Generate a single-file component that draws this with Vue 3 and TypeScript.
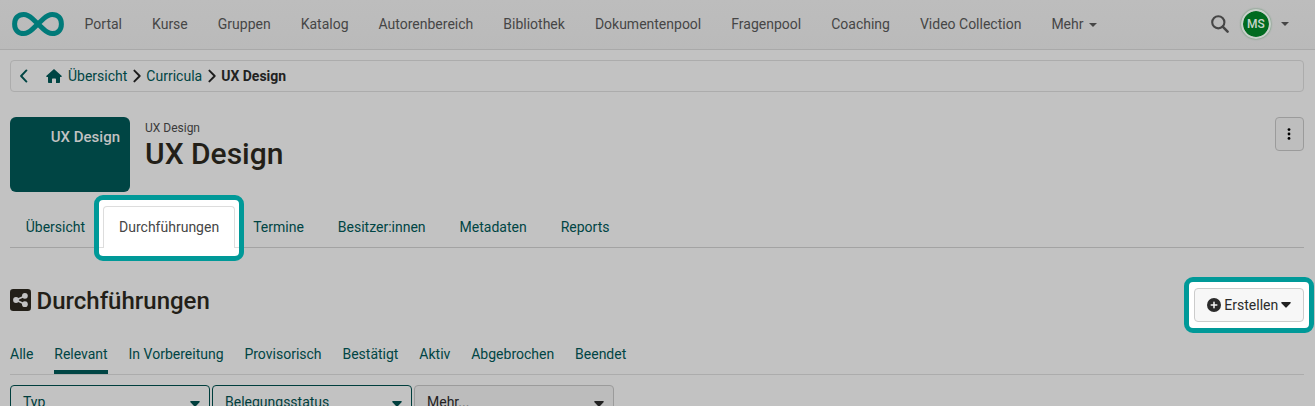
<script setup lang="ts">
const navItems: string[] = ['Portal', 'Kurse', 'Gruppen', 'Katalog', 'Autorenbereich', 'Bibliothek', 'Dokumentenpool', 'Fragenpool', 'Coaching', 'Video Collection']
const tabs: string[] = ['Übersicht', 'Durchführungen', 'Termine', 'Besitzer:innen', 'Metadaten', 'Reports']
const activeTab = 'Durchführungen'
const filters: string[] = ['Alle', 'Relevant', 'In Vorbereitung', 'Provisorisch', 'Bestätigt', 'Aktiv', 'Abgebrochen', 'Beendet']
const activeFilter = 'Relevant'
const selects: { label: string; muted: boolean }[] = [
  { label: 'Typ', muted: false },
  { label: 'Belegungsstatus', muted: false },
  { label: 'Mehr...', muted: true },
]
</script>

<template>
  <div class="page">
    <header class="navbar">
      <svg class="logo" viewBox="0 0 52 26" width="52" height="26">
        <path d="M26 13L20.500 7.800C17.500 5 15.500 3.400 11.800 3.400C6 3.400 2.600 7.200 2.600 13S6 22.600 11.800 22.600C15.500 22.600 17.500 21 20.500 18.200L31.500 7.800C34.500 5 36.500 3.400 40.200 3.400C46 3.400 49.400 7.200 49.400 13S46 22.600 40.200 22.600C36.500 22.600 34.500 21 31.500 18.200Z" fill="none" stroke="#007a79" stroke-width="5" />
      </svg>
      <nav class="nav">
        <a v-for="item in navItems" :key="item">{{ item }}</a>
        <a>Mehr<i class="caret"></i></a>
      </nav>
      <div class="tools">
        <svg class="search" viewBox="0 0 18 18" width="18" height="18">
          <circle cx="7.300" cy="7.300" r="6.100" fill="none" stroke="#464646" stroke-width="2.100" />
          <path d="M11.700 11.700L16.600 16.600" stroke="#464646" stroke-width="2.500" stroke-linecap="round" />
        </svg>
        <span class="avatar">MS</span>
        <i class="caret"></i>
      </div>
    </header>

    <div class="breadcrumb">
      <svg class="back" viewBox="0 0 8 14" width="8" height="14"><path d="M6.400 1.400L1.100 7L6.400 12.600" fill="none" stroke="#004544" stroke-width="1.900" stroke-linecap="round" stroke-linejoin="round" /></svg>
      <svg class="home" viewBox="0 0 16 14" width="16" height="14"><path d="M8 0L15.800 6.900Q16 8 15 8H14V13.200Q14 14 13.200 14H10V10.300Q10 9.600 9.300 9.600H6.700Q6 9.600 6 10.300V14H2.800Q2 14 2 13.200V8H1Q0 8 .2 6.900Z" fill="#004544" /></svg>
      <a>Übersicht</a>
      <svg class="sep" viewBox="0 0 8 14" width="8" height="14"><path d="M1.400 1.600L6.700 7L1.400 12.400" fill="none" stroke="#1c1c1c" stroke-width="1.900" stroke-linecap="round" stroke-linejoin="round" /></svg>
      <a>Curricula</a>
      <svg class="sep" viewBox="0 0 8 14" width="8" height="14"><path d="M1.400 1.600L6.700 7L1.400 12.400" fill="none" stroke="#1c1c1c" stroke-width="1.900" stroke-linecap="round" stroke-linejoin="round" /></svg>
      <strong>UX Design</strong>
    </div>

    <section class="hero">
      <div class="thumb">UX Design</div>
      <div class="titles">
        <small>UX Design</small>
        <h1>UX Design</h1>
      </div>
      <button class="more" aria-label="Menu">
        <svg viewBox="0 0 4 12" width="4" height="12"><circle cx="2" cy="1.600" r="1.400" /><circle cx="2" cy="6" r="1.400" /><circle cx="2" cy="10.400" r="1.400" /></svg>
      </button>
    </section>

    <nav class="tabs">
      <a v-for="tab in tabs" :key="tab" :class="{ active: tab === activeTab }"><span>{{ tab }}</span></a>
    </nav>

    <section class="heading">
      <svg viewBox="0 0 21 22" width="21" height="22">
        <rect width="21" height="22" rx="3.200" fill="#231f18" />
        <path d="M14.900 6.900L6 11L14.900 15.200" fill="none" stroke="#c2c2c2" stroke-width="1.700" />
        <circle cx="14.900" cy="6.800" r="2.900" fill="#c2c2c2" /><circle cx="6" cy="11" r="2.900" fill="#c2c2c2" /><circle cx="14.900" cy="15.200" r="2.900" fill="#c2c2c2" />
      </svg>
      <h2>Durchführungen</h2>
      <div class="spotlight">
        <button class="create">
          <svg class="plus" viewBox="0 0 14 14" width="14" height="14"><circle cx="7" cy="7" r="7" fill="#2b2b2b" /><path d="M7 4.200V9.800M4.200 7H9.800" stroke="#f7f7f7" stroke-width="1.500" stroke-linecap="round" /></svg>
          <span>Erstellen</span>
          <svg class="down" viewBox="0 0 10 6" width="10" height="6"><path d="M1 0H9Q10.300 .3 9.500 1.300L5.700 5.300Q5 6 4.300 5.300L.5 1.300Q-.3 .3 1 0Z" fill="#222" /></svg>
        </button>
      </div>
    </section>

    <nav class="filters">
      <a v-for="filter in filters" :key="filter" :class="{ active: filter === activeFilter }">{{ filter }}</a>
    </nav>

    <div class="selects">
      <button v-for="select in selects" :key="select.label" :class="{ muted: select.muted }">
        <span>{{ select.label }}</span>
        <svg viewBox="0 0 10 6" width="10" height="6"><path d="M1 0H9Q10.300 .3 9.500 1.300L5.700 5.300Q5 6 4.300 5.300L.5 1.300Q-.3 .3 1 0Z" fill="currentColor" /></svg>
      </button>
    </div>
  </div>
</template>

<style>
body { margin: 0; overflow: hidden; background: #c2c2c2; }
</style>

<style scoped>
* { box-sizing: border-box; }
.page {
  height: 406px;
  overflow: hidden;
  background: #c2c2c2;
  color: #222;
  font: 14px/20px Roboto, "Liberation Sans", sans-serif;
}
button { font: inherit; margin: 0; padding: 0; }
svg { display: block; flex: none; }
h1, h2 { margin: 0; color: #231f18; font-weight: 500; }
.navbar {
  display: flex;
  align-items: center;
  height: 50px;
  padding: 0 26px 2px 12px;
  border-bottom: 1px solid #a9a9a9;
  background: linear-gradient(#bdbdbd, #bababa);
  color: #464646;
}
.logo { margin-right: 6px; }
.nav { display: flex; margin-left: -.4px; white-space: nowrap; }
.nav a { padding: 0 15px; }
.caret {
  display: inline-block;
  border: 4px solid transparent;
  border-top-color: #464646;
  border-bottom: 0;
}
.nav .caret { margin-left: 6px; vertical-align: middle; }
.tools { display: flex; align-items: center; margin-left: auto; }
.search { margin-right: 12px; }
.avatar {
  width: 30px;
  height: 30px;
  margin-right: 10px;
  border: 2px solid #c8d0ca;
  border-radius: 50%;
  background: #006b20;
  background-clip: padding-box;
  box-shadow: 0 0 2px #528b61;
  color: #c8d5cc;
  font-size: 12px;
  font-weight: 500;
  line-height: 26px;
  text-align: center;
}
.breadcrumb {
  display: flex;
  align-items: center;
  height: 32px;
  margin: 10px 11px 0 10px;
  padding-left: 9px;
  border: 1px solid #acacac;
  border-radius: 4px;
}
.breadcrumb a { color: #004544; }
.home { margin: 0 6.500px 0 17.500px; }
.sep { margin: 0 5px 0 6px; }
.hero { display: flex; height: 75px; margin: 25px 11px 0 10px; }
.thumb {
  width: 120px;
  height: 75px;
  padding: 10px 10px;
  border-radius: 6px;
  background: #004544;
  color: #c2c2c2;
  font-size: 15px;
  font-weight: 500;
  line-height: 20px;
  text-align: right;
}
.titles { padding: 3px 0 0 15px; }
.titles small { display: block; color: #3a3a3a; font-size: 12px; line-height: 16px; }
.titles h1 { font-size: 30px; line-height: 36px; }
.more {
  display: flex;
  align-items: center;
  justify-content: center;
  width: 29px;
  height: 34px;
  margin-left: auto;
  padding-right: 1px;
  border: 1px solid #9b9b9b;
  border-radius: 4px;
  background: #bebebe;
}
.tabs {
  display: flex;
  gap: 2px;
  height: 42px;
  margin: 14px 11px 0 10px;
  border-bottom: 1px solid #a3a3a3;
}
.tabs a {
  position: relative;
  height: 42px;
  padding: 10px 15px;
  border: 1px solid transparent;
  color: #004544;
}
.tabs a span { position: relative; left: -.3px; z-index: 1; }
.tabs .active {
  color: #464646;
  z-index: 1;
}
.tabs .active::before {
  content: "";
  position: absolute;
  z-index: -1;
  inset: -12px -10px -14px;
  border: 5px solid #009998;
  border-radius: 9px;
  background: linear-gradient(#ddd, #ddd) 0 47px / 5px 1px no-repeat, linear-gradient(#ddd, #ddd) 100% 47px / 5px 1px no-repeat, #fff;
}
.tabs .active::after {
  content: "";
  position: absolute;
  inset: -1px -1px 0;
  border: 1px solid #ddd;
  border-bottom: 0;
  border-radius: 4px 4px 0 0;
}
.heading {
  display: flex;
  align-items: center;
  height: 56px;
  margin: 29px 1px 0 10px;
}
.heading > svg { margin: -10px 5.500px 0 0; }
h2 { margin-top: -8px; font-size: 24px; line-height: 28px; }
.spotlight {
  width: 130px;
  height: 56px;
  margin-left: auto;
  padding: 6px 5px;
  border: 5px solid #009998;
  border-radius: 9px;
  background: #fff;
}
.create {
  display: flex;
  align-items: center;
  justify-content: center;
  width: 110px;
  height: 34px;
  border: 1px solid #ccc;
  border-radius: 4px;
  background: #f7f7f7;
  color: #2b2b2b;
}
.create .plus { margin-right: 3.500px; }
.create .down { margin-left: 3px; }
.filters {
  display: flex;
  gap: 20.900px;
  height: 31px;
  margin: 11px 11px 0 10px;
  border-bottom: 1px solid #acacac;
}
.filters a { height: 30px; color: #004544; }
.filters .active { border-bottom: 4px solid #004544; }
.selects { display: flex; gap: 2px; margin: 10px 0 0 10px; }
.selects button {
  display: flex;
  align-items: center;
  justify-content: space-between;
  width: 200px;
  height: 34px;
  padding: 0 9px 0 12px;
  border: 1px solid #003e3d;
  border-radius: 4px;
  background: transparent;
  color: #003e3d;
}
.selects svg { margin-top: 4px; }
.selects .muted { border-color: #9b9b9b; background: #bcbcbc; color: #222; }
</style>
